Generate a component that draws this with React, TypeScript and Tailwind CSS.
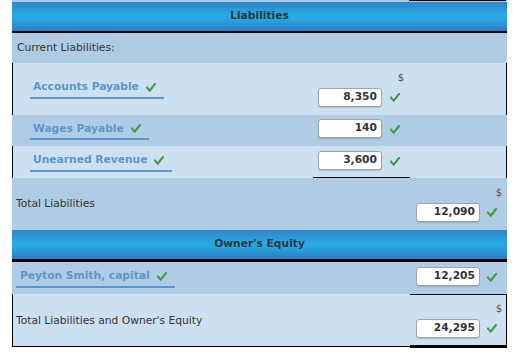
import React from "react";

const font = { fontFamily: '"DejaVu Sans", Verdana, sans-serif' };

function Check() {
  return (
    <svg width="10" height="9" viewBox="0 0 10 9" className="shrink-0">
      <path d="M1 4.6 L3.7 7.6 L9 1" fill="none" stroke="#3c9c3c" strokeWidth="2.1" strokeLinecap="square" />
    </svg>
  );
}

function AccountLabel({ text, indent }: { text: string; indent: string }) {
  return (
    <div className={`${indent} flex items-center gap-[7px] border-b-2 border-[#5b97cd] pr-[8px] pb-[1px] text-[10.7px] font-bold text-[#5b97cd]`}>
      <span>{text}</span>
      <Check />
    </div>
  );
}

function Amount({ value }: { value: string }) {
  return (
    <div className="flex h-[19px] w-[64px] items-center justify-end rounded-[3px] border border-[#a3a3a3] bg-white pr-[4px] text-[10.7px] font-bold text-[#333] shadow-[0_1px_1px_rgba(0,0,0,0.15)]">
      {value}
    </div>
  );
}

function Dollar({ pr }: { pr: string }) {
  return <div className={`${pr} h-[12px] self-end text-[10px] leading-[12px] text-[#555]`}>$</div>;
}

function Header({ title, bottom }: { title: string; bottom: string }) {
  return (
    <div
      className={`flex items-center justify-center ${bottom} border-black bg-[linear-gradient(to_bottom,#3184ca_0%,#27a9e2_45%,#27a6e0_60%,#2c7cc5_100%)] text-[10.7px] font-bold text-[#2e3640]`}
    >
      {title}
    </div>
  );
}

export default function App() {
  const dark = "bg-[#afcce4]";
  const light = "bg-[#cde0f1]";
  return (
    <div className="h-[356px] w-[526px] bg-white" style={font}>
      <div className="ml-[12px] w-[495px]">
        {/* strip above the header */}
        <div className={`flex h-[2px] ${dark}`}>
          <div className="flex-1" />
          <div className="w-[97px] border-t border-black" />
          <div className="w-[1px]" />
        </div>

        <Header title="Liabilities" bottom="h-[31px] border-b-2" />

        {/* Current Liabilities */}
        <div className={`flex h-[30px] items-center border-x border-transparent ${dark} pl-[4px] text-[10.7px] text-[#333]`}>
          Current Liabilities:
        </div>

        {/* Accounts Payable */}
        <div className={`flex h-[52px] border-x border-black ${light}`}>
          <div className="flex flex-1 items-center">
            <AccountLabel text="Accounts Payable" indent="ml-[17px] pl-[3px]" />
          </div>
          <div className="flex w-[97px] flex-col pt-[9px]">
            <Dollar pr="pr-[6px]" />
            <div className="mt-[4px] flex items-center gap-[8px] pl-[5px]">
              <Amount value="8,350" />
              <Check />
            </div>
          </div>
          <div className="w-[96px]" />
        </div>

        {/* Wages Payable */}
        <div className={`flex h-[31px] border-x border-transparent ${dark}`}>
          <div className="flex flex-1 items-center">
            <AccountLabel text="Wages Payable" indent="ml-[17px] pl-[3px]" />
          </div>
          <div className="flex w-[97px] items-start gap-[8px] pl-[5px] pt-[4px]">
            <Amount value="140" />
            <div className="pt-[6px]">
              <Check />
            </div>
          </div>
          <div className="w-[96px]" />
        </div>

        {/* Unearned Revenue */}
        <div className={`flex h-[32px] border-x border-black ${light}`}>
          <div className="flex flex-1 items-center">
            <AccountLabel text="Unearned Revenue" indent="ml-[17px] pl-[3px]" />
          </div>
          <div className="flex w-[97px] items-start gap-[8px] border-b border-black pl-[5px] pt-[5px]">
            <Amount value="3,600" />
            <div className="pt-[6px]">
              <Check />
            </div>
          </div>
          <div className="w-[96px]" />
        </div>

        {/* Total Liabilities */}
        <div className={`flex h-[52px] border-x border-transparent ${dark}`}>
          <div className="flex flex-1 items-center pl-[3px] text-[10.7px] text-[#333]">Total Liabilities</div>
          <div className="w-[97px]" />
          <div className="flex w-[96px] flex-col pt-[9px]">
            <Dollar pr="pr-[4px]" />
            <div className="mt-[4px] flex items-center gap-[7px] pl-[6px]">
              <Amount value="12,090" />
              <Check />
            </div>
          </div>
        </div>

        <Header title="Owner's Equity" bottom="h-[32px] border-b-[3px]" />

        {/* Capital */}
        <div className={`flex h-[32px] border-x border-transparent ${dark}`}>
          <div className="flex flex-1 items-center">
            <AccountLabel text="Peyton Smith, capital" indent="ml-[3px] pl-[4px]" />
          </div>
          <div className="w-[97px]" />
          <div className="flex w-[96px] items-start gap-[7px] pl-[6px] pt-[5px]">
            <Amount value="12,205" />
            <div className="pt-[6px]">
              <Check />
            </div>
          </div>
        </div>

        {/* Total Liabilities and Owner's Equity */}
        <div className={`flex h-[53px] border-b border-l border-black ${light}`}>
          <div className="flex flex-1 items-center pl-[3px] pt-[2px] text-[10.7px] text-[#333]">
            Total Liabilities and Owner's Equity
          </div>
          <div className="w-[97px]" />
          <div className="-mb-[2px] flex w-[97px] flex-col border-b-[3px] border-r border-t border-black pt-[8px]">
            <Dollar pr="pr-[4px]" />
            <div className="mt-[4px] flex items-center gap-[7px] pl-[6px]">
              <Amount value="24,295" />
              <Check />
            </div>
          </div>
        </div>
      </div>
    </div>
  );
}
